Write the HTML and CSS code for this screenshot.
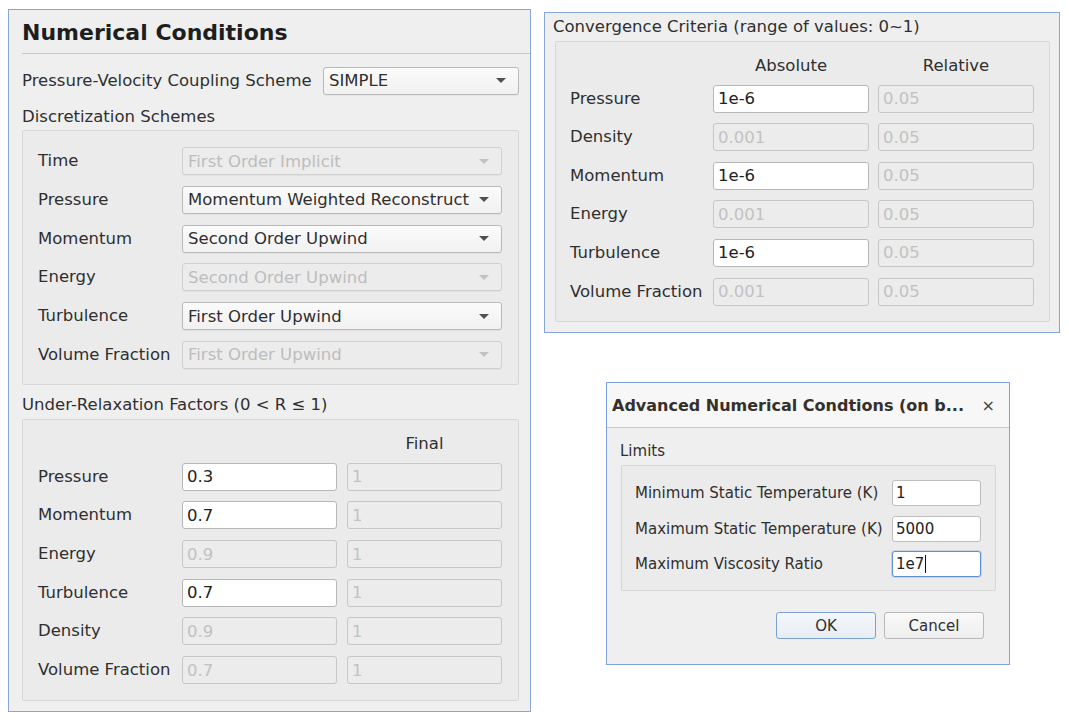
FILE: index.html
```html
<!DOCTYPE html>
<html>
<head>
<meta charset="utf-8">
<link rel="stylesheet" href="styles.css">
</head>
<body>
<div class="canvas">
  <section class="panel numerical">
    <h1 class="title">Numerical Conditions</h1>
    <div class="pv-row">
      <span class="lbl">Pressure-Velocity Coupling Scheme</span>
      <div class="combo pv-combo"><span>SIMPLE</span><i class="arrow"></i></div>
    </div>
    <div class="section-label">Discretization Schemes</div>
    <div class="group disc">
      <span class="lbl">Time</span><div class="combo disabled"><span>First Order Implicit</span><i class="arrow"></i></div>
      <span class="lbl">Pressure</span><div class="combo"><span>Momentum Weighted Reconstruct</span><i class="arrow"></i></div>
      <span class="lbl">Momentum</span><div class="combo"><span>Second Order Upwind</span><i class="arrow"></i></div>
      <span class="lbl">Energy</span><div class="combo disabled"><span>Second Order Upwind</span><i class="arrow"></i></div>
      <span class="lbl">Turbulence</span><div class="combo"><span>First Order Upwind</span><i class="arrow"></i></div>
      <span class="lbl">Volume Fraction</span><div class="combo disabled"><span>First Order Upwind</span><i class="arrow"></i></div>
    </div>
    <div class="section-label relax-label">Under-Relaxation Factors (0 &lt; R ≤ 1)</div>
    <div class="group relax">
      <span></span><span></span><span class="colhead">Final</span>
      <span class="lbl">Pressure</span><div class="field">0.3</div><div class="field disabled">1</div>
      <span class="lbl">Momentum</span><div class="field">0.7</div><div class="field disabled">1</div>
      <span class="lbl">Energy</span><div class="field disabled">0.9</div><div class="field disabled">1</div>
      <span class="lbl">Turbulence</span><div class="field">0.7</div><div class="field disabled">1</div>
      <span class="lbl">Density</span><div class="field disabled">0.9</div><div class="field disabled">1</div>
      <span class="lbl">Volume Fraction</span><div class="field disabled">0.7</div><div class="field disabled">1</div>
    </div>
  </section>

  <div class="right-col">
    <section class="panel conv">
      <div class="conv-title">Convergence Criteria (range of values: 0~1)</div>
      <div class="group conv-grid">
        <span></span><span class="colhead">Absolute</span><span class="colhead">Relative</span>
        <span class="lbl">Pressure</span><div class="field">1e-6</div><div class="field disabled">0.05</div>
        <span class="lbl">Density</span><div class="field disabled">0.001</div><div class="field disabled">0.05</div>
        <span class="lbl">Momentum</span><div class="field">1e-6</div><div class="field disabled">0.05</div>
        <span class="lbl">Energy</span><div class="field disabled">0.001</div><div class="field disabled">0.05</div>
        <span class="lbl">Turbulence</span><div class="field">1e-6</div><div class="field disabled">0.05</div>
        <span class="lbl">Volume Fraction</span><div class="field disabled">0.001</div><div class="field disabled">0.05</div>
      </div>
    </section>

    <section class="dialog">
      <header class="dlg-titlebar">
        <span class="dlg-title">Advanced Numerical Condtions (on b...</span>
        <span class="dlg-close">×</span>
      </header>
      <div class="dlg-body">
        <div class="limits-label">Limits</div>
        <div class="group limits">
          <span class="lbl">Minimum Static Temperature (K)</span><div class="field">1</div>
          <span class="lbl">Maximum Static Temperature (K)</span><div class="field">5000</div>
          <span class="lbl">Maximum Viscosity Ratio</span><div class="field focus">1e7<span class="caret"></span></div>
        </div>
        <div class="buttons">
          <button class="btn default">OK</button>
          <button class="btn">Cancel</button>
        </div>
      </div>
    </section>
  </div>
</div>
</body>
</html>
```

FILE: styles.css
```css
* { box-sizing: border-box; }
html, body { margin: 0; padding: 0; background: #ffffff; }
body {
  font-family: "DejaVu Sans", "Liberation Sans", sans-serif;
  font-size: 16.5px;
  color: #2f2f2f;
}
.canvas {
  display: flex;
  align-items: flex-start;
  width: 1069px;
  height: 722px;
  overflow: hidden;
}

.panel {
  background: #efefef;
  border: 1px solid #86a6d4;
}

/* ---------- left panel ---------- */
.numerical {
  margin: 9px 0 0 8px;
  width: 523px;
  height: 703px;
  display: flex;
  flex-direction: column;
  padding: 0 11px 0 13px;
}
.title {
  margin: 0 -11px 0 0;
  padding: 10px 0 7px 0;
  font-size: 22px;
  line-height: 26px;
  font-weight: bold;
  color: #1e1e1e;
  border-bottom: 1px solid #c6c6c6;
}
.pv-row {
  margin-top: 12px;
  height: 29px;
  display: flex;
  align-items: center;
}
.pv-combo {
  margin-left: auto;
  width: 196px;
  height: 29px;
}
.section-label {
  margin-top: 12px;
  line-height: 20px;
  height: 20px;
  margin-bottom: 3px;
}
.relax-label { margin-top: 10px; margin-bottom: 4px; }

.group {
  background: #ebebeb;
  border: 1px solid #d7d7d7;
  border-radius: 2px;
}
.disc {
  height: 255px;
  padding: 16px 16px 0 15px;
  display: grid;
  grid-template-columns: 144px 320px;
  grid-auto-rows: 28px;
  row-gap: 10.75px;
  align-items: center;
}
.relax {
  height: 282px;
  padding: 15px 16px 0 15px;
  display: grid;
  grid-template-columns: 134px 155px 155px;
  grid-template-rows: 17px repeat(6, 28px);
  column-gap: 10px;
  row-gap: 10.7px;
  align-items: center;
}
.lbl { white-space: nowrap; line-height: 20px; }
.colhead { text-align: center; line-height: 17px; }

/* combo box */
.combo {
  height: 28px;
  border: 1px solid #b9b9b9;
  border-radius: 3px;
  background: linear-gradient(#fbfbfb, #f1f1f1);
  display: flex;
  align-items: center;
  padding: 0 12px 0 5px;
  box-shadow: 0 1px 0 rgba(0,0,0,0.04);
  white-space: nowrap;
  overflow: hidden;
}
.combo span { flex: 1; overflow: hidden; }
.combo .arrow {
  width: 0; height: 0;
  border-left: 5px solid transparent;
  border-right: 5px solid transparent;
  border-top: 5px solid #505050;
  margin-left: 6px;
}
.combo.disabled {
  background: #ececec;
  border-color: #d0d0d0;
  color: #bdbdbd;
}
.combo.disabled .arrow { border-top-color: #c2c2c2; }

/* text field */
.field {
  height: 28px;
  border: 1px solid #b7b7b7;
  border-radius: 3px;
  background: #ffffff;
  display: flex;
  align-items: center;
  padding: 0 4px;
  color: #222;
  white-space: nowrap;
}
.field.disabled {
  background: #ececec;
  border-color: #c6c6c6;
  color: #c2c2c2;
}

/* ---------- right column ---------- */
.right-col {
  margin: 12px 0 0 13px;
  display: flex;
  flex-direction: column;
  align-items: flex-start;
}
.conv {
  width: 516px;
  height: 321px;
  padding: 4px 9px 0 8px;
}
.conv-title { line-height: 20px; height: 20px; }
.conv-grid {
  margin: 4px 0 0 2px;
  width: 495px;
  height: 281px;
  padding: 15px 15px 0 14px;
  display: grid;
  grid-template-columns: 134px 156px 156px;
  grid-template-rows: 17px repeat(6, 28px);
  column-gap: 9px;
  row-gap: 10.6px;
  align-items: center;
}

/* ---------- dialog ---------- */
.dialog {
  margin: 49px 0 0 62px;
  width: 404px;
  height: 283px;
  border: 1px solid #7fa3d6;
  background: #efefef;
  font-size: 15px;
  display: flex;
  flex-direction: column;
}
.dlg-titlebar {
  height: 45px;
  background: #f7f7f7;
  border-bottom: 1px solid #c8c8c8;
  display: flex;
  align-items: center;
  padding: 0 14px 0 5px;
  border-radius: 3px 3px 0 0;
}
.dlg-title {
  font-weight: bold;
  font-size: 16px;
  color: #35302c;
  flex: 1;
  white-space: nowrap;
}
.dlg-close {
  font-size: 16px;
  color: #444;
}
.dlg-body {
  padding: 0 13px 0 14px;
  display: flex;
  flex-direction: column;
}
.limits-label {
  margin: 13px 0 0 -1px;
  line-height: 20px;
}
.limits {
  margin-top: 4px;
  width: 375px;
  height: 126px;
  padding: 14px 14px 0 13px;
  display: grid;
  grid-template-columns: 1fr 89px;
  grid-auto-rows: 26px;
  row-gap: 9.5px;
  align-items: center;
}
.limits .field {
  height: 26px;
  padding: 0 3px;
  border-color: #bdbdbd;
}
.limits .field.focus {
  border-color: #5f8fcc;
  box-shadow: 0 0 0 1px rgba(95,143,204,0.25);
}
.caret {
  display: inline-block;
  width: 1px;
  height: 18px;
  background: #111;
  margin-left: 1px;
}
.buttons {
  margin-top: 21px;
  display: flex;
  justify-content: flex-end;
  gap: 8px;
  padding-right: 12px;
}
.btn {
  width: 100px;
  height: 27px;
  font-family: "DejaVu Sans", "Liberation Sans", sans-serif;
  font-size: 15px;
  color: #2f2f2f;
  border: 1px solid #b9b9b9;
  border-radius: 3px;
  background: linear-gradient(#f9f9f9, #eeeeee);
  padding: 0;
}
.btn.default {
  border-color: #7ba1d3;
  background: linear-gradient(#f4f7fb, #e8edf3);
}
```
